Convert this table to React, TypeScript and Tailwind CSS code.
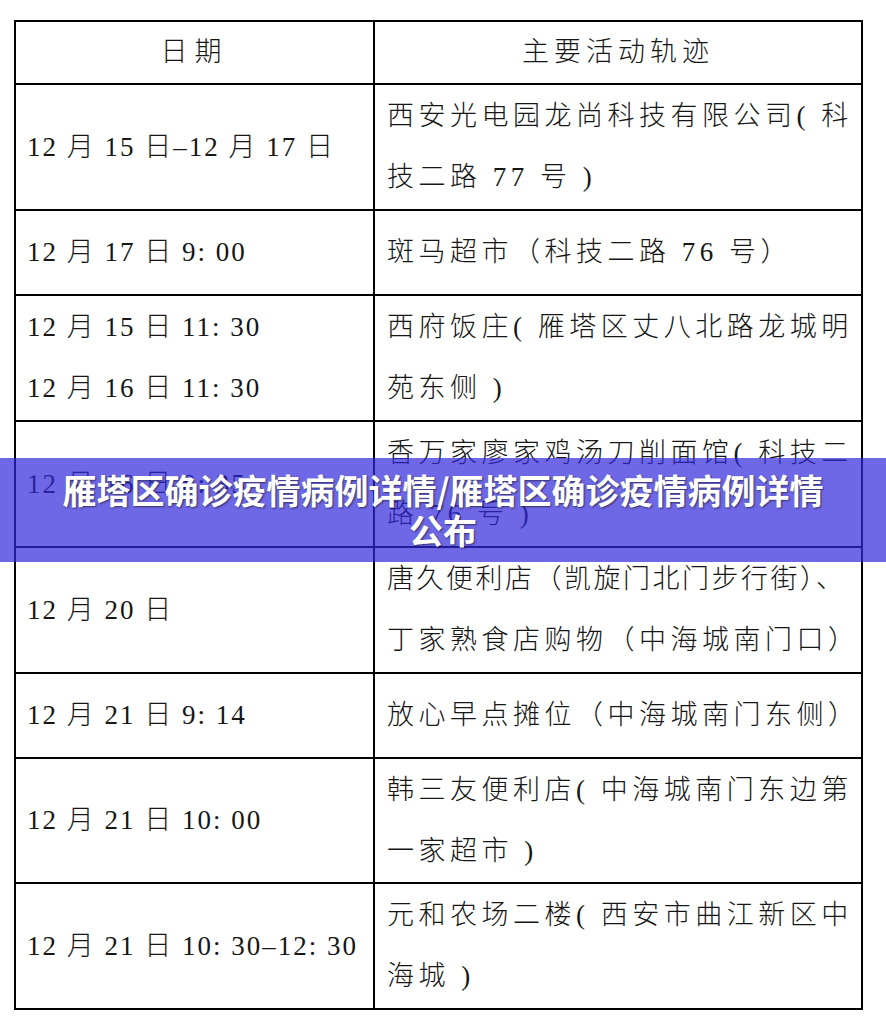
const font = "[font-family:'Liberation_Serif','Noto_Sans_CJK_SC',serif]";

type Row = {
  h: string;
  date: string[];
  place: string[];
  tight?: boolean;
};

const rows: Row[] = [
  {
    h: "h-[124px]",
    date: ["12 月 15 日–12 月 17 日"],
    place: ["西安光电园龙尚科技有限公司( 科", "技二路 77 号 )"],
  },
  { h: "h-[83px]", date: ["12 月 17 日 9: 00"], place: ["斑马超市（科技二路 76 号）"] },
  {
    h: "h-[124px]",
    date: ["12 月 15 日 11: 30", "12 月 16 日 11: 30"],
    place: ["西府饭庄( 雁塔区丈八北路龙城明", "苑东侧 )"],
  },
  {
    h: "h-[124px]",
    date: ["12 月 16 日 8: 35"],
    place: ["香万家廖家鸡汤刀削面馆( 科技二", "路 76 号 )"],
  },
  {
    h: "h-[124px]",
    date: ["12 月 20 日"],
    place: ["唐久便利店（凯旋门北门步行街）、", "丁家熟食店购物（中海城南门口）"],
    tight: true,
  },
  { h: "h-[83px]", date: ["12 月 21 日 9: 14"], place: ["放心早点摊位（中海城南门东侧）"] },
  {
    h: "h-[123px]",
    date: ["12 月 21 日 10: 00"],
    place: ["韩三友便利店( 中海城南门东边第", "一家超市 )"],
  },
  {
    h: "h-[124px]",
    date: ["12 月 21 日 10: 30–12: 30"],
    place: ["元和农场二楼( 西安市曲江新区中", "海城 )"],
  },
];

export default function App() {
  return (
    <main className={`relative min-h-[1022px] w-[886px] bg-white pl-[14px] pt-[20px] ${font}`}>
      <div className="grid w-[849px] grid-cols-[357px_486px] gap-[2px] bg-black p-[2px] text-[27px] font-light text-[#161616]">
        <div className="flex h-[61px] items-center justify-center bg-white tracking-[7px]">日期</div>
        <div className="flex h-[61px] items-center justify-center bg-white tracking-[5px]">主要活动轨迹</div>

        {rows.map((r, i) => (
          <div key={i} className="contents">
            <div className={`flex ${r.h} flex-col justify-center bg-white pl-[11px] leading-[61px] tracking-[2px] whitespace-nowrap`}>
              {r.date.map((d) => (
                <span key={d}>{d}</span>
              ))}
            </div>
            <div
              className={`flex ${r.h} flex-col justify-center overflow-hidden bg-white pl-[12px] leading-[61px] whitespace-nowrap`}
            >
              {r.place.map((p, j) => (
                <span key={p} className={r.tight && j === 0 ? "tracking-[2.5px]" : "tracking-[4.5px]"}>
                  {p}
                </span>
              ))}
            </div>
          </div>
        ))}
      </div>

      {/* title banner over the table */}
      <div className="absolute inset-x-0 top-[458px] flex h-[104px] items-center justify-center bg-[rgba(50,40,220,0.7)]">
        <h1 className="max-w-[784px] text-center text-[34px] leading-[40px] font-bold text-white [font-family:'Noto_Sans_CJK_SC',sans-serif] [text-shadow:1px_1px_2px_rgba(0,0,0,0.55)]">
          雁塔区确诊疫情病例详情/雁塔区确诊疫情病例详情公布
        </h1>
      </div>
    </main>
  );
}
